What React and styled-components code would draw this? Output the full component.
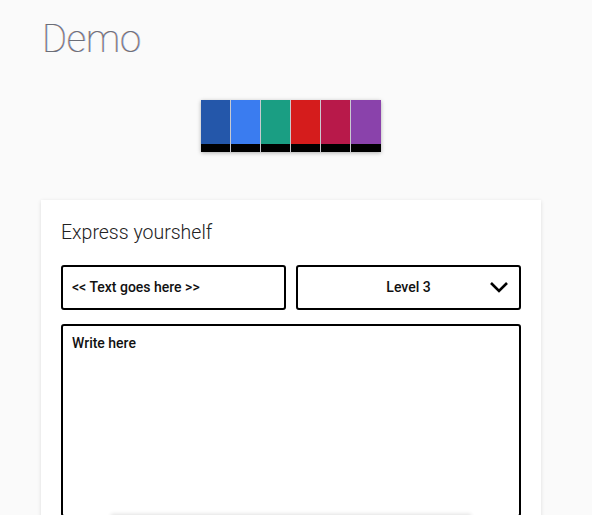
import React from 'react';
import styled, { createGlobalStyle } from 'styled-components';

const swatches = ['#2457aa', '#3a7cf0', '#1a9e83', '#d51c1c', '#b8194a', '#8a42ab'];

const Global = createGlobalStyle`
  html, body {
    margin: 0;
    padding: 0;
    background: #fafafa;
    font-family: Roboto, 'Liberation Sans', sans-serif;
  }
  * {
    box-sizing: border-box;
  }
`;

const Page = styled.div`
  width: 500px;
  margin-left: 41px;
  padding-top: 16px;
`;

const Title = styled.h1`
  margin: 0 0 0 1px;
  font-size: 38px;
  font-weight: 100;
  line-height: 46px;
  color: #6b6e78;
  text-shadow: -0.6px 0 rgba(230, 140, 70, 0.5), 0.6px 0 rgba(70, 130, 240, 0.5);
`;

const Palette = styled.div`
  display: flex;
  justify-content: center;
  margin: 38px 0 48px;
`;

const Strip = styled.div`
  display: flex;
  box-shadow: 0 1px 4px rgba(0, 0, 0, 0.3);
`;

const Swatch = styled.div`
  width: 30px;
  height: 52px;
  display: flex;
  flex-direction: column;
  border-right: 1px solid rgba(90, 90, 110, 0.3);
  &:last-child {
    border-right: none;
  }
`;

const Color = styled.div`
  flex: 1;
  background: ${(p) => p.color};
`;

const Base = styled.div`
  height: 8px;
  background: #000;
`;

const Card = styled.div`
  background: #fff;
  padding: 20px 20px 30px;
  box-shadow: 0 1px 4px rgba(0, 0, 0, 0.12);
  min-height: 340px;
`;

const Heading = styled.h2`
  margin: 0 0 19px;
  font-size: 19.5px;
  font-weight: 300;
  line-height: 26px;
  color: #222;
`;

const Row = styled.div`
  display: flex;
  gap: 10px;
  margin-bottom: 14px;
`;

const Field = styled.div`
  flex: 1;
  height: 45px;
  border: 2px solid #000;
  border-radius: 3px;
  display: flex;
  align-items: center;
  justify-content: ${(p) => (p.center ? 'center' : 'flex-start')};
  padding: 0 9px 2px;
  font-size: 14px;
  font-weight: 500;
  color: #111;
  position: relative;
`;

const Chevron = styled.svg`
  position: absolute;
  right: 10px;
  top: 13px;
`;

const Area = styled.div`
  height: 193px;
  border: 2px solid #000;
  border-radius: 3px;
  padding: 9px 9px;
  font-size: 14px;
  font-weight: 500;
  color: #111;
  background: transparent;
`;

const Send = styled.div`
  width: 360px;
  height: 36px;
  margin: -2px auto 0;
  box-shadow: 0 -1px 4px rgba(0, 0, 0, 0.12);
  background: #fafafa;
  position: relative;
`;

export default function App() {
  return (
    <>
      <Global />
      <Page>
        <Title>Demo</Title>
        <Palette>
          <Strip>
            {swatches.map((c) => (
              <Swatch key={c}>
                <Color color={c} />
                <Base />
              </Swatch>
            ))}
          </Strip>
        </Palette>
        <Card>
          <Heading>Express yourshelf</Heading>
          <Row>
            <Field>&lt;&lt; Text goes here &gt;&gt;</Field>
            <Field center>
              Level 3
              <Chevron width="20" height="14" viewBox="0 0 20 14">
                <polyline points="2,3 10,11 18,3" fill="none" stroke="#000" strokeWidth="2.6" />
              </Chevron>
            </Field>
          </Row>
          <Area>Write here</Area>
          <Send />
        </Card>
      </Page>
    </>
  );
}
